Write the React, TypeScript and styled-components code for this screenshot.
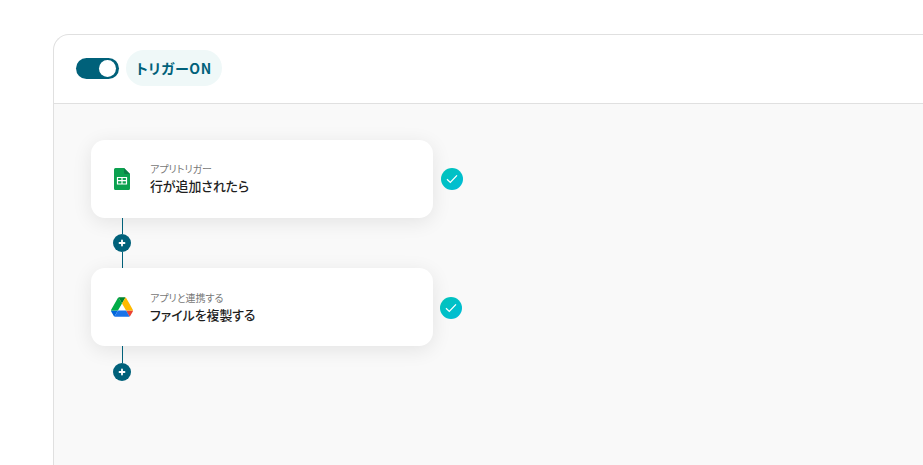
import React from "react";
import styled, { createGlobalStyle } from "styled-components";

const Global = createGlobalStyle`
  html, body { margin: 0; padding: 0; background: #fff; overflow: hidden; }
  body { font-family: "Noto Sans CJK JP", "Noto Sans", sans-serif; font-feature-settings: "palt"; }
`;
const Page = styled.div`
  width: 923px; height: 465px; overflow: hidden; box-sizing: border-box;
  padding: 34px 0 0 53px; background: #fff;
`;
const Panel = styled.section`
  width: 900px; height: 460px; box-sizing: border-box;
  border: 1px solid #e0e0e0; border-right: none; border-bottom: none;
  border-top-left-radius: 16px; overflow: hidden; background: #fff;
  display: flex; flex-direction: column;
`;
const Header = styled.header`
  height: 69px; box-sizing: border-box; border-bottom: 1px solid #e0e0e0;
  display: flex; align-items: center; padding: 0 0 2px 22px; gap: 7px; flex: none;
`;
const Toggle = styled.div`
  width: 43px; height: 21px; border-radius: 11px; background: #00617a;
  display: flex; align-items: center; justify-content: flex-end; padding-right: 3px; box-sizing: border-box;
`;
const Knob = styled.span`
  width: 17px; height: 17px; border-radius: 50%; background: #fff; display: block;
`;
const TriggerPill = styled.div`
  height: 36px; padding: 0 10px; border-radius: 18px; background: #eff8f8;
  color: #00617a; font-size: 14px; font-weight: 700; letter-spacing: 0.7px;
  display: flex; align-items: center;
`;
const Canvas = styled.div`
  flex: 1; background: #f9f9f9; padding: 36px 0 0 37px;
  display: flex; flex-direction: column; align-items: flex-start;
`;
const StepRow = styled.div`
  display: flex; align-items: center; gap: ${(p: { $gap: number }) => p.$gap}px;
`;
const Card = styled.div`
  width: 342px; height: 78px; box-sizing: border-box; background: #fff; border-radius: 14px;
  box-shadow: 0 4px 20px rgba(0, 0, 0, 0.09);
  display: flex; align-items: center; padding-left: 19px;
`;
const IconSlot = styled.div`
  width: 24px; height: 24px; margin-right: 16px; display: flex; align-items: center; justify-content: center; flex: none;
`;
const Texts = styled.div<{ $lift: number }>`
  display: flex; flex-direction: column; gap: 1px; margin-bottom: ${(p) => p.$lift}px;
`;
const Caption = styled.div`
  font-size: 10px; line-height: 15px; color: #777; white-space: nowrap;
`;
const Title = styled.div`
  font-size: 12.900px; line-height: 18px; font-weight: 500; color: #1f1f1f; white-space: nowrap;
`;
const Check = styled.div<{ $drop: number }>`
  width: 22px; height: 22px; border-radius: 50%; margin-top: ${(p) => p.$drop}px;
  background: linear-gradient(135deg, #00c4b8, #00bcd8);
  display: flex; align-items: center; justify-content: center;
`;
const Connector = styled.div`
  width: 18px; margin-left: 22px; display: flex; flex-direction: column; align-items: center;
`;
const Line = styled.div<{ $h: number }>`
  width: 1px; height: ${(p) => p.$h}px; background: #00617a;
`;
const Plus = styled.div`
  width: 18px; height: 18px; border-radius: 50%; background: #00617a; flex: none;
  display: flex; align-items: center; justify-content: center;
`;

const CheckIcon = () => (
  <svg width="12" height="10" viewBox="0 0 12 10" fill="none">
    <path d="M1 5.200 4.300 8.400 11 1.400" stroke="#fff" strokeWidth="1.300" />
  </svg>
);
const PlusIcon = () => (
  <svg width="8" height="8" viewBox="0 0 8 8">
    <path d="M4 1.500v5M1.500 4h5" stroke="#fff" strokeWidth="1.800" strokeLinecap="round" />
  </svg>
);
const SheetsIcon = () => (
  <svg width="16" height="22" viewBox="0 0 16 22">
    <path d="M1.500 0H10l6 6v14.500a1.500 1.500 0 0 1-1.500 1.500h-13A1.500 1.500 0 0 1 0 20.500v-19A1.500 1.500 0 0 1 1.500 0Z" fill="#0ba14f" />
    <path d="M10 0l6 6h-4.500A1.500 1.500 0 0 1 10 4.500Z" fill="#0a7d45" />
    <path d="M3.500 9.500h9v6.500h-9ZM8 9.500V16M3.500 12.700h9" fill="none" stroke="#ffffff" strokeWidth="1.200" />
  </svg>
);
const DriveIcon = () => (
  <svg width="22" height="20" viewBox="0 0 87.300 78">
    <path d="m6.600 66.850 3.850 6.650c.8 1.400 1.950 2.500 3.300 3.300L27.500 53H0c0 1.550.4 3.100 1.200 4.500z" fill="#0066da" />
    <path d="M43.650 25 29.900 1.200c-1.350.8-2.500 1.900-3.300 3.300L1.200 48.500A9 9 0 0 0 0 53h27.500z" fill="#00ac47" />
    <path d="M73.550 76.800c1.350-.8 2.500-1.900 3.300-3.300l1.600-2.750L86.100 57.500c.8-1.400 1.200-2.950 1.200-4.500H59.800l5.850 11.500z" fill="#ea4335" />
    <path d="M43.650 25 57.400 1.200C56.050.4 54.500 0 52.900 0H34.400c-1.600 0-3.150.45-4.500 1.200z" fill="#00832d" />
    <path d="M59.800 53H27.500L13.750 76.800c1.350.8 2.900 1.200 4.500 1.200h50.800c1.600 0 3.150-.45 4.500-1.200z" fill="#1a73e8" />
    <path d="M73.400 26.500 60.700 4.500c-.8-1.400-1.950-2.500-3.300-3.300L43.650 25 59.800 53h27.450c0-1.550-.4-3.100-1.200-4.500z" fill="#ffba00" />
  </svg>
);

export default function App() {
  return (
    <Page>
      <Global />
      <Panel>
        <Header>
          <Toggle><Knob /></Toggle>
          <TriggerPill>トリガーON</TriggerPill>
        </Header>
        <Canvas>
          <StepRow $gap={8}>
            <Card>
              <IconSlot><SheetsIcon /></IconSlot>
              <Texts $lift={2}>
                <Caption>アプリトリガー</Caption>
                <Title>行が追加されたら</Title>
              </Texts>
            </Card>
            <Check $drop={0}><CheckIcon /></Check>
          </StepRow>
          <Connector>
            <Line $h={16} />
            <Plus><PlusIcon /></Plus>
            <Line $h={16} />
          </Connector>
          <StepRow $gap={7}>
            <Card>
              <IconSlot><DriveIcon /></IconSlot>
              <Texts $lift={0}>
                <Caption>アプリと連携する</Caption>
                <Title>ファイルを複製する</Title>
              </Texts>
            </Card>
            <Check $drop={2}><CheckIcon /></Check>
          </StepRow>
          <Connector>
            <Line $h={17} />
            <Plus><PlusIcon /></Plus>
          </Connector>
        </Canvas>
      </Panel>
    </Page>
  );
}
